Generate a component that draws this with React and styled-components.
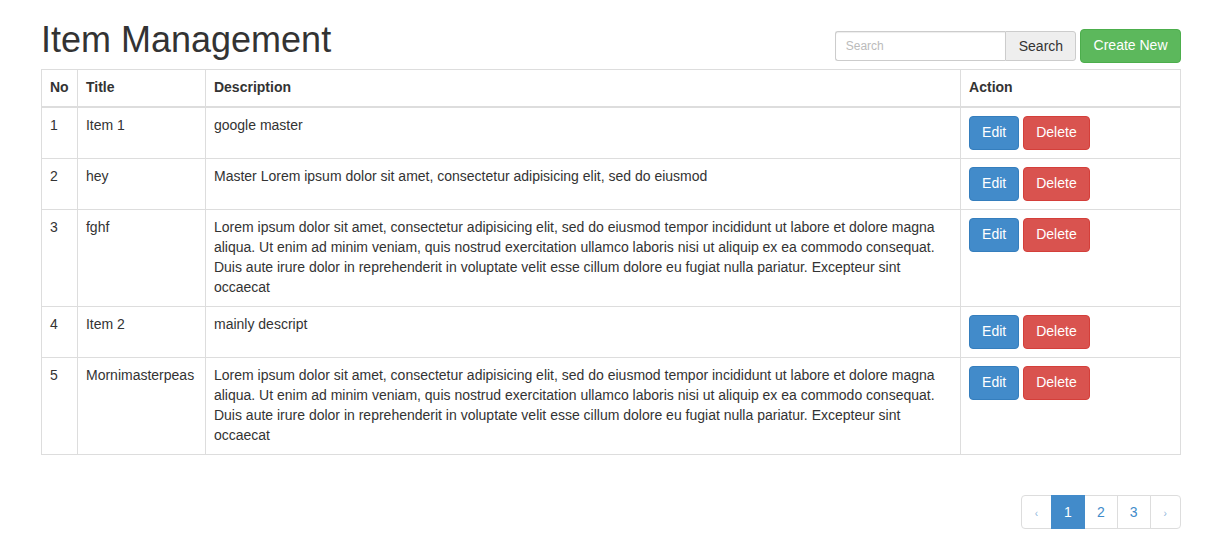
import React from "react";
import styled, { createGlobalStyle } from "styled-components";

const Global = createGlobalStyle`
  html, body { margin: 0; padding: 0; background: #fff; }
  body {
    font-family: "Liberation Sans", Arial, Helvetica, sans-serif;
    font-size: 14px;
    line-height: 1.428571;
    color: #333;
  }
  * { box-sizing: border-box; }
`;

const Container = styled.div`
  width: 1140px;
  margin-left: 41px;
`;

const Header = styled.div`
  display: flex;
  justify-content: space-between;
  align-items: flex-start;
`;

const Title = styled.h1`
  font-family: "Liberation Sans", Arial, sans-serif;
  font-weight: 500;
  font-size: 36px;
  line-height: 39px;
  margin: 20px 0 10px;
  color: #333;
`;

const Tools = styled.div`
  display: flex;
  align-items: center;
  gap: 4px;
  margin-top: 29px;
`;

const InputGroup = styled.div`
  display: flex;
  height: 30px;
`;

const SearchInput = styled.input`
  width: 170px;
  height: 30px;
  border: 1px solid #ccc;
  border-right: 0;
  border-radius: 3px 0 0 3px;
  padding: 5px 10px;
  font-family: "Liberation Sans", Arial, sans-serif;
  font-size: 12px;
  color: #555;
  box-shadow: inset 0 1px 1px rgba(0, 0, 0, 0.075);
  outline: none;
  &::placeholder { color: #bbb; }
`;

const GroupButton = styled.button`
  height: 30px;
  padding: 0 12px 0 13px;
  border: 1px solid #ccc;
  border-radius: 0 3px 3px 0;
  background: #eee;
  color: #333;
  font-family: "Liberation Sans", Arial, sans-serif;
  font-size: 14px;
`;

const colors = {
  success: ["#5cb85c", "#4cae4c"],
  primary: ["#428bca", "#357ebd"],
  danger: ["#d9534f", "#d43f3a"],
};

const Btn = styled.button`
  display: inline-block;
  height: 34px;
  padding: 6px ${(p) => (p.$wide ? "12.5px" : "12px")};
  font-family: "Liberation Sans", Arial, sans-serif;
  font-size: 14px;
  line-height: 1.428571;
  color: #fff;
  background: ${(p) => colors[p.$kind][0]};
  border: 1px solid ${(p) => colors[p.$kind][1]};
  border-radius: 4px;
  cursor: pointer;
`;

const Table = styled.table`
  width: 1140px;
  border-collapse: collapse;
  border-spacing: 0;
  border: 1px solid #ddd;
  margin-bottom: 20px;
`;

const Th = styled.th`
  width: ${(p) => p.$w}px;
  text-align: left;
  font-weight: bold;
  padding: 8px;
  line-height: 1.428571;
  border: 1px solid #ddd;
  border-bottom: 2px solid #ddd;
  vertical-align: bottom;
`;

const Td = styled.td`
  padding: 8px;
  line-height: 1.428571;
  border: 1px solid #ddd;
  vertical-align: top;
`;

const Actions = styled.div`
  display: flex;
  gap: 4px;
`;

const PagerRow = styled.div`
  display: flex;
  justify-content: flex-end;
`;

const Pager = styled.ul`
  display: flex;
  list-style: none;
  margin: 20px 0;
  padding: 0;
`;

const PageItem = styled.li`
  margin-left: -1px;
  &:first-child { margin-left: 0; }
  &:first-child a { border-radius: 4px 0 0 4px; }
  &:last-child a { border-radius: 0 4px 4px 0; }
`;

const PageLink = styled.a`
  display: block;
  height: 34px;
  padding: 6px 12px;
  line-height: 20px;
  border: 1px solid ${(p) => (p.$active ? "#428bca" : "#ddd")};
  background: ${(p) => (p.$active ? "#428bca" : "#fff")};
  color: ${(p) => (p.$active ? "#fff" : p.$muted ? "#8fb6dc" : "#428bca")};
  text-decoration: none;
  position: relative;
  z-index: ${(p) => (p.$active ? 2 : 1)};
  font-size: ${(p) => (p.$muted ? "10px" : "14px")};
  ${(p) => (p.$muted ? "width: 31.5px; text-align: center; padding: 8px 0 4px;" : "")}
`;

const lorem =
  "Lorem ipsum dolor sit amet, consectetur adipisicing elit, sed do eiusmod tempor incididunt ut labore et dolore magna aliqua. Ut enim ad minim veniam, quis nostrud exercitation ullamco laboris nisi ut aliquip ex ea commodo consequat. Duis aute irure dolor in reprehenderit in voluptate velit esse cillum dolore eu fugiat nulla pariatur. Excepteur sint occaecat";

const rows = [
  [1, "Item 1", "google master"],
  [2, "hey", "Master Lorem ipsum dolor sit amet, consectetur adipisicing elit, sed do eiusmod"],
  [3, "fghf", lorem],
  [4, "Item 2", "mainly descript"],
  [5, "Mornimasterpeas", lorem],
];

export default function App() {
  return (
    <>
      <Global />
      <Container>
        <Header>
          <Title>Item Management</Title>
          <Tools>
            <InputGroup>
              <SearchInput placeholder="Search" />
              <GroupButton>Search</GroupButton>
            </InputGroup>
            <Btn $kind="success" $wide>Create New</Btn>
          </Tools>
        </Header>
        <Table>
          <thead>
            <tr>
              <Th $w={36}>No</Th>
              <Th $w={128}>Title</Th>
              <Th $w={756}>Description</Th>
              <Th $w={220}>Action</Th>
            </tr>
          </thead>
          <tbody>
            {rows.map(([n, t, d]) => (
              <tr key={n}>
                <Td>{n}</Td>
                <Td>{t}</Td>
                <Td>{d}</Td>
                <Td>
                  <Actions>
                    <Btn $kind="primary">Edit</Btn>
                    <Btn $kind="danger">Delete</Btn>
                  </Actions>
                </Td>
              </tr>
            ))}
          </tbody>
        </Table>
        <PagerRow>
          <Pager>
            <PageItem><PageLink href="#" $muted>‹</PageLink></PageItem>
            <PageItem><PageLink href="#" $active>1</PageLink></PageItem>
            <PageItem><PageLink href="#">2</PageLink></PageItem>
            <PageItem><PageLink href="#">3</PageLink></PageItem>
            <PageItem><PageLink href="#" $muted>›</PageLink></PageItem>
          </Pager>
        </PagerRow>
      </Container>
    </>
  );
}
